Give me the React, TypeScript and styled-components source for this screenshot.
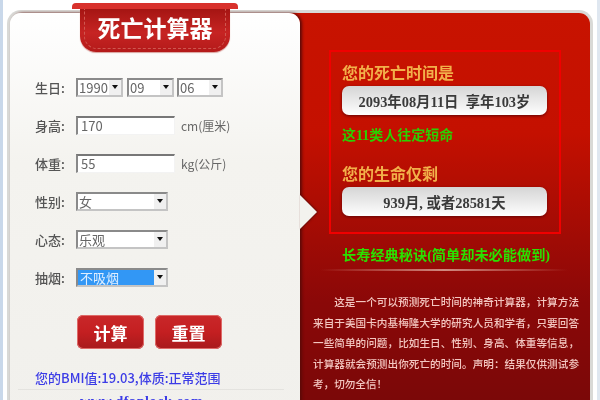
import React, { FC } from 'react';
import styled, { createGlobalStyle } from 'styled-components';

const cjk = '"Noto Sans CJK SC", "Liberation Sans", sans-serif';
const serif = '"Liberation Serif", "Noto Sans CJK SC", serif';

const GlobalStyle = createGlobalStyle`
  html, body {
    margin: 0;
    padding: 0;
    background: #fff;
  }
  #root {
    width: 600px;
    height: 400px;
    overflow: hidden;
  }
`;

const Page = styled.div`
  width: 600px;
  height: 400px;
  box-sizing: border-box;
  padding: 10px 4px 0 0;
  display: flex;
  background: #fff;
  border-left: 3px solid #c9d8ea;
  border-right: 3px solid #dfe7f0;
  overflow: hidden;
  filter: blur(0.45px);
`;

const Shell = styled.div`
  margin-left: 4px;
  flex: 1;
  height: 420px;
  display: flex;
  border: 3px solid #d9d9d6;
  border-bottom: none;
  border-radius: 14px 14px 0 0;
  background: #f3f2ee;
`;

const LeftPanel = styled.div`
  position: relative;
  z-index: 1;
  width: 290px;
  flex: none;
  border-radius: 11px 11px 0 0;
  background: linear-gradient(#ffffff 0, #f4f3ef 150px, #f1f0ec 100%);
  box-shadow: 2px 0 3px #5c0a08;
`;

const Ribbon = styled.div`
  position: absolute;
  left: 62px;
  top: -10px;
  width: 166px;
  height: 49px;
`;

const RibbonBar = styled.div`
  height: 6px;
  border-radius: 4px 4px 0 0;
  background: #d8312c;
`;

const RibbonBody = styled.div`
  position: relative;
  height: 43px;
  margin: 0 8px;
  box-sizing: border-box;
  border-radius: 0 0 16px 16px;
  background: linear-gradient(#a51513, #c62423 55%, #b41a1a);
  box-shadow: 0 1px 1px #d9a09c;
  display: flex;
  align-items: center;
  justify-content: center;
  padding-bottom: 7px;
  color: #fff;
  font: 700 23px ${cjk};
  white-space: nowrap;

  &::after {
    content: '';
    position: absolute;
    inset: 0 4px 3px;
    border: 1px dashed #cf5750;
    border-top: none;
    border-radius: 0 0 13px 13px;
  }
`;

const Notch = styled.div`
  position: absolute;
  left: 100%;
  top: 182px;
  width: 0;
  height: 0;
  border-top: 17px solid transparent;
  border-bottom: 17px solid transparent;
  border-left: 17px solid #f3f2ee;
  filter: drop-shadow(1px 0 1px #5c0a08);
`;

const Form = styled.div`
  padding: 55px 0 0 25px;
`;

const Row = styled.div`
  height: 38px;
  display: flex;
  align-items: center;
`;

const Label = styled.div`
  width: 41px;
  color: #555;
  font: 500 13px ${cjk};
  white-space: nowrap;
`;

const Controls = styled.div`
  display: flex;
  align-items: center;
  gap: 3px;
`;

const Field = styled.div<{ $w: number }>`
  width: ${p => p.$w}px;
  height: 19px;
  box-sizing: border-box;
  border: 1px solid #f3f3f3;
  border-top: 2px solid #777;
  border-left: 2px solid #888;
  background: #fff;
  color: #666;
  font: 13px/16px ${cjk};
  padding-left: 3px;
`;

const Unit = styled.div`
  margin-left: 6px;
  color: #666;
  font: 12px ${cjk};
`;

const SelectBox = styled.div<{ $w: number; $ml?: number }>`
  width: ${p => p.$w}px;
  margin-left: ${p => p.$ml ?? 0}px;
  height: 19px;
  box-sizing: border-box;
  border: 2px solid #8a8a8a;
  border-right-color: #c4c4c4;
  border-bottom-color: #c4c4c4;
  background: #fff;
  display: flex;
  align-items: stretch;
`;

const SelectValue = styled.div<{ $active?: boolean }>`
  flex: 1;
  min-width: 0;
  padding-left: ${p => (p.$active ? 2 : 1)}px;
  background: ${p => (p.$active ? '#3297f5' : 'transparent')};
  color: ${p => (p.$active ? '#dfeeff' : '#666')};
  font: 13px/15px ${cjk};
  white-space: nowrap;
`;

const SelectArrow = styled.div`
  width: 12px;
  flex: none;
  display: flex;
  align-items: center;
  justify-content: center;
  background: #f0f0f0;

  &::after {
    content: '';
    border: 3.5px solid transparent;
    border-top: 4px solid #111;
    border-bottom: none;
  }
`;

const Select: FC<{ w: number; value: string; ml?: number; active?: boolean }> = ({ w, value, ml, active }) => (
  <SelectBox $w={w} $ml={ml}>
    <SelectValue $active={active}>{value}</SelectValue>
    <SelectArrow />
  </SelectBox>
);

const Buttons = styled.div`
  display: flex;
  gap: 11px;
  margin: 19px 0 0 67px;
`;

const RedButton = styled.div`
  width: 67px;
  height: 34px;
  border-radius: 6px;
  background: linear-gradient(#c9282a, #c41f21 50%, #a81a1c);
  box-shadow: inset 0 0 0 1px #de6a68;
  display: flex;
  align-items: center;
  justify-content: center;
  color: #fff;
  font: 700 17px ${cjk};
`;

const Bmi = styled.div`
  margin: 20px 0 0 25px;
  color: #3c3ce6;
  font: 500 13px/18px ${cjk};
  white-space: nowrap;
`;

const Rule = styled.div`
  height: 1px;
  margin: 2px 16px 0 8px;
  background: #e4e3df;
`;

const Site = styled.div`
  margin: 4px 0 0 70px;
  color: #3c3ce6;
  font: 700 14px ${serif};
  letter-spacing: 0.6px;
  white-space: nowrap;
`;

const RightPanel = styled.div`
  flex: 1;
  margin-left: -12px;
  border-radius: 0 11px 0 0;
  background: linear-gradient(#c81300 0, #c41000 120px, #8a0808 290px, #760808 100%);
  padding: 37px 0 0 41px;
`;

const ResultFrame = styled.div`
  width: 232px;
  height: 184px;
  box-sizing: border-box;
  border: 2px solid #f00000;
  padding: 10px 0 0 11px;
`;

const ResultTitle = styled.div<{ $gap?: number }>`
  margin-top: ${p => p.$gap ?? 0}px;
  color: #f2b04a;
  font: 700 16px/20px ${cjk};
  white-space: nowrap;
`;

const Pill = styled.div`
  width: 205px;
  height: 29px;
  margin-top: 4px;
  border-radius: 7px;
  background: linear-gradient(#d5d5d5, #f8f8f8 85%, #fff);
  box-shadow: 0 1px 3px #650505;
  display: flex;
  align-items: center;
  justify-content: center;
  color: #3a3a3a;
  font: 700 14.4px ${serif};
  white-space: pre;
`;

const Note = styled.div`
  margin-top: 12px;
  color: #2bd000;
  font: 700 14px/18px ${serif};
  white-space: nowrap;
`;

const SecretTitle = styled.div`
  margin: 11px 0 0 13px;
  color: #2be000;
  font: 700 14.2px/20px ${serif};
  white-space: nowrap;
`;

const Divider = styled.div`
  width: 248px;
  height: 2px;
  margin: 4px 0 0 -9px;
  background: linear-gradient(90deg, transparent, #d08a80 50%, transparent);
`;

const Intro = styled.p`
  width: 266px;
  margin: 21px 0 0 -16px;
  color: #f3c6c0;
  font: 500 10.6px/20.5px ${cjk};
  text-indent: 2em;
  text-align: justify;
`;

export default function App() {
  return (
    <Page>
      <GlobalStyle />
      <Shell>
        <LeftPanel>
          <Notch />
          <Ribbon>
            <RibbonBar />
            <RibbonBody>死亡计算器</RibbonBody>
          </Ribbon>
          <Form>
            <Row>
              <Label>生日:</Label>
              <Controls>
                <Select w={47} value="1990" />
                <Select w={47} value="09" ml={1} />
                <Select w={46} value="06" />
              </Controls>
            </Row>
            <Row>
              <Label>身高:</Label>
              <Field $w={99}>170</Field>
              <Unit>cm(厘米)</Unit>
            </Row>
            <Row>
              <Label>体重:</Label>
              <Field $w={99}>55</Field>
              <Unit>kg(公斤)</Unit>
            </Row>
            <Row>
              <Label>性别:</Label>
              <Select w={92} value="女" />
            </Row>
            <Row>
              <Label>心态:</Label>
              <Select w={92} value="乐观" />
            </Row>
            <Row>
              <Label>抽烟:</Label>
              <Select w={92} value="不吸烟" active />
            </Row>
          </Form>
          <Buttons>
            <RedButton>计算</RedButton>
            <RedButton>重置</RedButton>
          </Buttons>
          <Bmi>您的BMI值:19.03,体质:正常范围</Bmi>
          <Rule />
          <Site>www.dfanlock.com</Site>
        </LeftPanel>
        <RightPanel>
          <ResultFrame>
            <ResultTitle>您的死亡时间是</ResultTitle>
            <Pill>2093年08月11日  享年103岁</Pill>
            <Note>这11类人往定短命</Note>
            <ResultTitle $gap={18}>您的生命仅剩</ResultTitle>
            <Pill>939月, 或者28581天</Pill>
          </ResultFrame>
          <SecretTitle>长寿经典秘诀(简单却未必能做到)</SecretTitle>
          <Divider />
          <Intro>
            这是一个可以预测死亡时间的神奇计算器，计算方法来自于美国卡内基梅隆大学的研究人员和学者，只要回答一些简单的问题，比如生日、性别、身高、体重等信息，计算器就会预测出你死亡的时间。声明：结果仅供测试参考，切勿全信！
          </Intro>
        </RightPanel>
      </Shell>
    </Page>
  );
}
